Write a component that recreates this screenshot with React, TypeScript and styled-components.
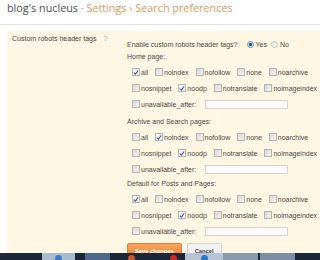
import React from "react";
import styled, { createGlobalStyle } from "styled-components";

const Global = createGlobalStyle`
  html, body {
    margin: 0;
    width: 320px;
    height: 260px;
    overflow: hidden;
    background: #ffffff;
    font-family: "Liberation Sans", Arial, sans-serif;
  }
`;

const Page = styled.div`
  display: flex;
  flex-direction: column;
  height: 260px;
`;

const Header = styled.div`
  height: 25px;
  padding: 1px 0 0 7px;
  box-sizing: border-box;
  border-bottom: 1px solid #e2e2e2;
  font-family: "Open Sans", "Liberation Sans", sans-serif;
  font-size: 10.8px;
  line-height: 14px;
  color: #4d4d4d;
  white-space: nowrap;
`;

const Crumb = styled.span<{ $link?: boolean; $sep?: boolean }>`
  color: ${(p) => (p.$link ? "#e39a60" : p.$sep ? "#9a9a9a" : "#4d4d4d")};
`;

const Panel = styled.div`
  flex: 1;
  min-height: 0;
  overflow: hidden;
  margin: 6px 0 0 7px;
  padding-left: 5px;
  background: #fff7e4;
  display: grid;
  grid-template-columns: 115px 1fr;
  align-items: start;
  font-size: 7px;
  color: #474747;
`;

const SideLabel = styled.div`
  padding-top: 3px;
  line-height: 10px;
  white-space: nowrap;
`;

const Help = styled.span`
  color: #7ea4c4;
  margin-left: 7px;
`;

const Form = styled.div`
  padding-top: 7px;
  display: flex;
  flex-direction: column;
`;

const Question = styled.div`
  height: 12px;
  display: flex;
  align-items: center;
  white-space: nowrap;
`;

const RadioGroup = styled.span`
  display: flex;
  align-items: center;
  margin-left: 7px;
  gap: 2px;
`;

const Radio = styled.span<{ $on?: boolean }>`
  width: 7px;
  height: 7px;
  border-radius: 50%;
  box-sizing: border-box;
  border: 1px solid ${(p) => (p.$on ? "#6d8aa6" : "#c9c9c9")};
  background: ${(p) =>
    p.$on
      ? "radial-gradient(circle, #1d4a78 0 38%, #dfe9f2 46%)"
      : "linear-gradient(#e6e6e6, #fbfbfb)"};
  margin-left: 2px;
`;

const Heading = styled.div<{ $mt: number }>`
  height: 10px;
  line-height: 10px;
  margin: ${(p) => p.$mt}px 0 2px;
  white-space: nowrap;
`;

const Row = styled.div`
  height: 16px;
  display: flex;
  align-items: center;
  gap: 7px;
  padding-left: 5px;
  white-space: nowrap;
`;

const Check = styled.label`
  display: flex;
  align-items: center;
  gap: 1px;
`;

const Box = styled.span<{ $on?: boolean }>`
  width: 8px;
  height: 8px;
  box-sizing: border-box;
  border: 1px solid #b3b3b3;
  background: ${(p) =>
    p.$on ? "#f6f8fb" : "linear-gradient(135deg, #d9d9d9, #f3f3f3)"};
  display: flex;
  align-items: center;
  justify-content: center;
`;

const DateInput = styled.span`
  width: 83px;
  height: 9px;
  margin-left: 2px;
  box-sizing: border-box;
  border: 1px solid #d2d2d2;
  background: #fbfbfb;
`;

const Buttons = styled.div`
  display: flex;
  gap: 5px;
  margin-top: 4px;
`;

const Button = styled.span<{ $primary?: boolean }>`
  height: 16px;
  padding: 0 7px;
  box-sizing: border-box;
  display: flex;
  align-items: center;
  font-size: 5.8px;
  font-weight: bold;
  border-radius: 2px;
  border: 1px solid ${(p) => (p.$primary ? "#e57b2e" : "#d4d4d4")};
  background: ${(p) =>
    p.$primary ? "linear-gradient(#f7a35e, #ee8230)" : "#f3f3f3"};
  color: ${(p) => (p.$primary ? "#ffffff" : "#444444")};
`;

const Taskbar = styled.div`
  height: 7px;
  flex-shrink: 0;
  display: flex;
  background: #1b2738;
`;

const Task = styled.div<{ $w: number; $bg: string }>`
  width: ${(p) => p.$w}px;
  background: ${(p) => p.$bg};
  display: flex;
  justify-content: center;
  align-items: flex-start;
  flex-shrink: 0;
`;

const Dot = styled.span<{ $c: string }>`
  width: 7px;
  height: 7px;
  margin-top: 2px;
  border-radius: 50%;
  background: ${(p) => p.$c};
`;

function Tick() {
  return (
    <svg width="7" height="7" viewBox="0 0 7 7">
      <path d="M1 3.6 L2.8 5.4 L6 1.2" fill="none" stroke="#33579a" strokeWidth="1.3" />
    </svg>
  );
}

type Opt = { name: string; on?: boolean };

function Options({ items }: { items: Opt[] }) {
  return (
    <Row>
      {items.map((o) => (
        <Check key={o.name}>
          <Box $on={o.on}>{o.on && <Tick />}</Box>
          {o.name}
        </Check>
      ))}
    </Row>
  );
}

function Group({ title, mt, checked }: { title: string; mt: number; checked: string[] }) {
  const first = ["all", "noindex", "nofollow", "none", "noarchive"];
  const second = ["nosnippet", "noodp", "notranslate", "noimageindex"];
  const mark = (n: string) => ({ name: n, on: checked.includes(n) });
  return (
    <>
      <Heading $mt={mt}>{title}</Heading>
      <Options items={first.map(mark)} />
      <Options items={second.map(mark)} />
      <Row>
        <Check>
          <Box />
          unavailable_after:
        </Check>
        <DateInput />
      </Row>
    </>
  );
}

export default function App() {
  return (
    <Page>
      <Global />
      <Header>
        <Crumb>blog's nucleus</Crumb>
        <Crumb $sep> · </Crumb>
        <Crumb $link>Settings</Crumb>
        <Crumb $link> › </Crumb>
        <Crumb $link>Search preferences</Crumb>
      </Header>

      <Panel>
        <SideLabel>
          Custom robots header tags<Help>?</Help>
        </SideLabel>

        <Form>
          <Question>
            Enable custom robots header tags?
            <RadioGroup>
              <Radio $on /> Yes
              <Radio /> No
            </RadioGroup>
          </Question>

          <Group title="Home page:" mt={2} checked={["all", "noodp"]} />
          <Group title="Archive and Search pages:" mt={5} checked={["noindex", "noodp"]} />
          <Group title="Default for Posts and Pages:" mt={2} checked={["all", "noodp"]} />

          <Buttons>
            <Button $primary>Save changes</Button>
            <Button>Cancel</Button>
          </Buttons>
        </Form>
      </Panel>

      <Taskbar>
        <Task $w={42} $bg="#1b2738" />
        <Task $w={33} $bg="#a8bbcf"><Dot $c="#3a78c8" /></Task>
        <Task $w={10} $bg="#1b2738" />
        <Task $w={25} $bg="#4f6789" />
        <Task $w={15} $bg="#1b2738" />
        <Task $w={12} $bg="#1b2738"><Dot $c="#c9582e" /></Task>
        <Task $w={30} $bg="#1b2738" />
        <Task $w={12} $bg="#1b2738"><Dot $c="#d2262b" /></Task>
        <Task $w={6} $bg="#1b2738" />
        <Task $w={38} $bg="#b6c4d4"><Dot $c="#2f78c6" /></Task>
        <Task $w={35} $bg="#8a9bb0" />
        <Task $w={2} $bg="#1b2738" />
        <Task $w={35} $bg="#7d8ea4" />
      </Taskbar>
    </Page>
  );
}
